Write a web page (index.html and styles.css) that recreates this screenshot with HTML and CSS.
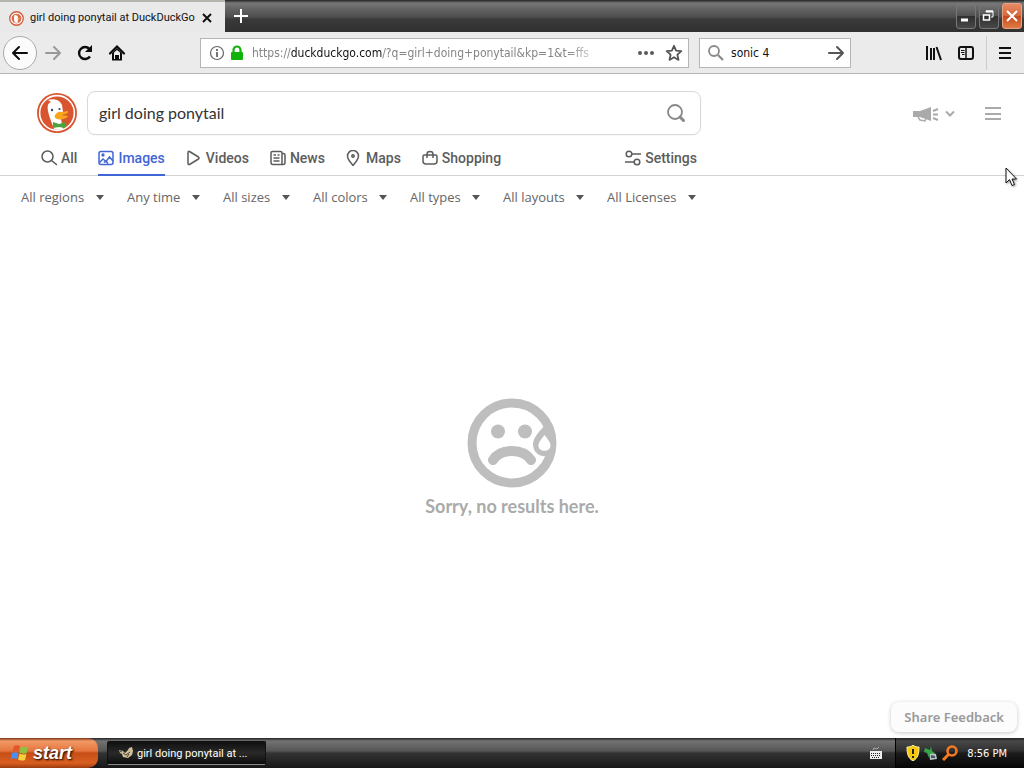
FILE: index.html
```html
<!DOCTYPE html>
<html lang="en">
<head>
<meta charset="utf-8">
<meta name="viewport" content="width=device-width, initial-scale=1">
<title>girl doing ponytail at DuckDuckGo</title>
<link rel="stylesheet" href="styles.css">
</head>
<body>
<svg class="defs" aria-hidden="true">
  <symbol id="duck" viewBox="0 0 40 40">
    <circle cx="20" cy="20" r="20" fill="#d9552f"/>
    <circle cx="20" cy="20" r="17.4" fill="#d9552f" stroke="#fff" stroke-width="1.6"/>
    <path d="M17 36c-2-6-5-12-6-18-1-5 0-8 3-9l-3-2c6-2 12 0 14 5l1 7-2 7 2 10c-3 1-6 1-9 0z" fill="#fff"/>
    <path d="M18 22c2-3 4-4 7-3 2 0 4-1 6-1 1 2-2 3-6 4 2 1 4 0 6 1-1 3-8 4-11 3-2-1-3-2-2-4z" fill="#f9a51b"/>
    <circle cx="15" cy="17" r="1.2" fill="#34475e"/>
    <circle cx="22.500" cy="16" r="1.100" fill="#34475e"/>
    <path d="M16 29l6 2 6-2v6l-6-1-6 1z" fill="#4ba43c"/>
  </symbol>
</svg>

<header class="titlebar">
  <div class="tab">
    <svg class="tab-logo" viewBox="0 0 16 16" aria-hidden="true"><circle cx="8" cy="8" r="7.200" fill="#fff" stroke="#d35b3c" stroke-width="1.400"/><circle cx="8" cy="8" r="5.200" fill="#dc6a4a"/><path d="M6 12C5 9 5 7 6 4l3 1 1 3-1 5z" fill="#fff"/><path d="M9 7l3 1-3 1z" fill="#f5b23b"/></svg>
    <span class="tab-title">girl doing ponytail at DuckDuckGo</span>
    <button class="bare" aria-label="Close tab"><svg width="10" height="10" viewBox="0 0 10 10"><path d="M1 1l8 8M9 1L1 9" stroke="#111" stroke-width="2"/></svg></button>
  </div>
  <button class="bare new-tab" aria-label="New tab"><svg width="14" height="14" viewBox="0 0 14 14"><path d="M7 0v14M0 7h14" stroke="#fff" stroke-width="2"/></svg></button>
  <div class="window-buttons">
    <button class="win" aria-label="Minimize"><svg width="16" height="16" viewBox="0 0 16 16"><path d="M3 12h7" stroke="#fff" stroke-width="3"/></svg></button>
    <button class="win" aria-label="Restore"><svg width="16" height="16" viewBox="0 0 16 16" fill="none" stroke="#fff"><path d="M5 4V3h7v6h-2"/><path d="M5 3.500h7" stroke-width="2"/><path d="M2.500 7h6v5h-6z" stroke-width="1.500"/></svg></button>
    <button class="win win-close" aria-label="Close"><svg width="16" height="16" viewBox="0 0 16 16"><path d="M3 3l10 10M13 3L3 13" stroke="#fff" stroke-width="2"/></svg></button>
  </div>
</header>

<nav class="toolbar" aria-label="Browser">
  <div class="nav-buttons">
    <button class="bare back" aria-label="Back"><svg width="18" height="18" viewBox="0 0 18 18" fill="none" stroke="#0c0c0d" stroke-width="2" stroke-linecap="round" stroke-linejoin="round"><path d="M16 9H2M8 3L2 9l6 6"/></svg></button>
    <button class="bare" aria-label="Forward"><svg width="18" height="18" viewBox="0 0 18 18" fill="none" stroke="#999" stroke-width="2" stroke-linecap="round" stroke-linejoin="round"><path d="M2 9h14M10 3l6 6-6 6"/></svg></button>
    <button class="bare" aria-label="Reload"><svg width="18" height="18" viewBox="0 0 18 18"><path d="M14 12.500A6 6 0 1 1 13.500 5" fill="none" stroke="#0c0c0d" stroke-width="2.400"/><path d="M16 1v7H9z" fill="#0c0c0d"/></svg></button>
    <button class="bare" aria-label="Home"><svg width="18" height="18" viewBox="0 0 18 18"><path d="M2 9.500L9 2.500l7 7" fill="none" stroke="#0c0c0d" stroke-width="2.200" stroke-linecap="round"/><path d="M4 9v7.500h10V9L9 4z" fill="#0c0c0d"/><path d="M6 8.500L9 6l3 2.500V15h-1v-4H7v4H6z" fill="#eee"/><path d="M8 11h2v4H8z" fill="#0c0c0d"/></svg></button>
  </div>
  <div class="address">
    <svg width="16" height="16" viewBox="0 0 16 16" aria-hidden="true"><circle cx="8" cy="8" r="6.500" fill="none" stroke="#666" stroke-width="1.200"/><path d="M8 7v5M8 4v2" stroke="#666" stroke-width="1.800"/></svg>
    <svg width="16" height="16" viewBox="0 0 16 16" aria-hidden="true"><rect x="2" y="7" width="12" height="8" rx="1" fill="#12b20c"/><path d="M4.500 8V5a3.500 3.500 0 0 1 7 0v3" fill="none" stroke="#12b20c" stroke-width="2.200"/></svg>
    <div class="url">https://<b>duckduckgo.com</b>/?q=girl+doing+ponytail&amp;kp=1&amp;t=ffs</div>
    <button class="bare" aria-label="Page actions"><svg width="18" height="18" viewBox="0 0 18 18" fill="#5a5a5a"><circle cx="3" cy="9" r="2"/><circle cx="9" cy="9" r="2"/><circle cx="15" cy="9" r="2"/></svg></button>
    <button class="bare" aria-label="Bookmark"><svg width="18" height="18" viewBox="0 0 18 18"><path d="M9 1.800l2.100 4.800 5.200.6-3.900 3.500 1.100 5.200L9 13.200l-4.500 2.700 1.100-5.200-3.900-3.500 5.200-.6z" fill="none" stroke="#555" stroke-width="1.800" stroke-linejoin="round"/></svg></button>
  </div>
  <form class="quick-search">
    <svg width="18" height="18" viewBox="0 0 18 18" aria-hidden="true" fill="none" stroke="#8a8a8a"><circle cx="7" cy="7" r="5" stroke-width="1.800"/><path d="M11 11l5 5" stroke-width="2.200"/></svg>
    <input type="text" value="sonic 4" aria-label="Browser search">
    <button type="button" class="bare" aria-label="Go"><svg width="18" height="18" viewBox="0 0 18 18" fill="none" stroke="#555" stroke-width="2" stroke-linecap="round" stroke-linejoin="round"><path d="M2 9h14M10 3l6 6-6 6"/></svg></button>
  </form>
  <div class="tools">
    <button class="bare" aria-label="Library"><svg width="18" height="18" viewBox="0 0 18 18" stroke="#111" stroke-width="2"><path d="M2 2v14M6 4v12M9 4v12M11.500 3L16 16"/></svg></button>
    <button class="bare" aria-label="Sidebar"><svg width="18" height="18" viewBox="0 0 18 18" fill="none" stroke="#111"><rect x="2" y="3" width="14" height="12" rx="2" stroke-width="2"/><path d="M9 3v12" stroke-width="1.500"/><path d="M4 6.500h3.500M4 8.500h3.500M5 10.500h2.500"/></svg></button>
    <button class="bare menu" aria-label="Menu"><svg width="18" height="18" viewBox="0 0 18 18" stroke="#111" stroke-width="2"><path d="M3 4h12M3 9h12M3 14h12"/></svg></button>
  </div>
</nav>

<div class="page">
  <header class="page-header">
    <div class="search-row">
      <a href="#" aria-label="DuckDuckGo"><svg class="logo" aria-hidden="true"><use href="#duck"/></svg></a>
      <form class="search">
        <input type="text" value="girl doing ponytail" aria-label="Search">
        <button type="button" class="bare" aria-label="Submit search"><svg width="20" height="20" viewBox="0 0 20 20" fill="none" stroke="#888"><circle cx="9" cy="9" r="7" stroke-width="1.800"/><path d="M14 14l3.500 3.500" stroke-width="3" stroke-linecap="round"/></svg></button>
      </form>
      <div class="header-actions">
        <button class="bare news" aria-label="Announcements">
          <svg width="26" height="18" viewBox="0 0 26 18" fill="#aaa"><path d="M0 7h7l11-4v14L7 13H0z"/><path d="M5 13l2 3 5 1 1-3" fill="none" stroke="#aaa" stroke-width="1.500"/><path d="M20 7l5-2M20 10.500h5M20 14l5 2" stroke="#aaa" stroke-width="2"/></svg>
          <svg width="10" height="8" viewBox="0 0 10 8"><path d="M1 2.500l4 4 4-4" fill="none" stroke="#aaa" stroke-width="2"/></svg>
        </button>
        <button class="bare" aria-label="Site menu"><svg width="16" height="16" viewBox="0 0 16 16"><path d="M0 3h16M0 9h16M0 14h16" stroke="#aaa" stroke-width="2"/></svg></button>
      </div>
    </div>
    <nav class="tabs" aria-label="Result types">
      <a href="#"><svg viewBox="0 0 16 16"><circle cx="6.500" cy="6.500" r="5.500"/><path d="M10.500 10.500L16 15"/></svg>All</a>
      <a href="#" class="active" aria-current="page"><svg viewBox="0 0 16 16"><rect x="1" y="1.500" width="14" height="13" rx="2"/><path d="M1.500 12.500L5 9l3 2.500L11.500 7l3.500 4M6 12.500l2-1.500 2 2.500"/><circle cx="5" cy="5" r=".9"/></svg>Images</a>
      <a href="#"><svg viewBox="0 0 16 16"><path d="M2 2.500v11c0 1 .8 1.300 1.500 1l9-5.500c.7-.5.700-1.500 0-2l-9-5.500c-.7-.5-1.500 0-1.500 1z"/></svg>Videos</a>
      <a href="#"><svg viewBox="0 0 16 16"><path d="M12 14V3c0-1-.5-1.500-1.500-1.500h-8C1.500 1.500 1 2 1 3v9.500C1 14 2 14.500 3 14.500h10c1.500 0 2-.5 2-2V5c0-1-.5-1.500-1.500-1.500H12"/><path d="M3.500 5H6M7.500 5h2M3.500 8h6M3.500 11h6"/></svg>News</a>
      <a href="#"><svg viewBox="0 0 16 16"><path d="M7 15.500C4.500 12.500 1.500 9.500 1.500 6a5.500 5.500 0 0 1 11 0c0 3.500-3 6.500-5.500 9.500z"/><circle cx="7" cy="6" r="1.200"/></svg>Maps</a>
      <a href="#"><svg viewBox="0 0 16 16"><path d="M2.500 5h11c1 0 1.500.5 1.500 1.500V11c0 2-1 3-3 3H4c-2 0-3-1-3-3V6.500C1 5.500 1.500 5 2.500 5zM5 8V4c0-3.500 6-3.500 6 0v4"/></svg>Shopping</a>
      <a href="#" class="settings"><svg viewBox="0 0 16 16"><circle cx="4" cy="4" r="2.800"/><path d="M7 4h9M0 12h9"/><circle cx="12" cy="12" r="2.800"/></svg>Settings</a>
    </nav>
  </header>

  <div class="filters">
    <label><select aria-label="Region"><option>All regions</option></select></label>
    <label><select aria-label="Time"><option>Any time</option></select></label>
    <label><select aria-label="Size"><option>All sizes</option></select></label>
    <label><select aria-label="Color"><option>All colors</option></select></label>
    <label><select aria-label="Type"><option>All types</option></select></label>
    <label><select aria-label="Layout"><option>All layouts</option></select></label>
    <label><select aria-label="License"><option>All Licenses</option></select></label>
  </div>

  <main class="empty">
    <svg width="90" height="90" viewBox="0 0 90 90" aria-hidden="true">
      <circle cx="45" cy="45" r="40" fill="none" stroke="#bebebe" stroke-width="9"/>
      <circle cx="31" cy="33.500" r="7" fill="#bebebe"/><circle cx="58" cy="33.500" r="7" fill="#bebebe"/>
      <path d="M26 62c8-12 30-12 38 0" fill="none" stroke="#bebebe" stroke-width="10" stroke-linecap="round"/>
      <path d="M79 26c-6 7-13 13-13 20 0 9 7 13 14 12l6-12-1-14z" fill="#bebebe"/>
      <path d="M77.500 37c-3 4-6 7-6 10.500 0 7 12 7 12 0 0-3.500-3-6.500-6-10.500z" fill="#fff"/>
    </svg>
    <p>Sorry, no results here.</p>
  </main>
  <footer class="feedback-row"><button class="feedback">Share Feedback</button></footer>
</div>

<footer class="taskbar">
  <button class="start">
    <svg width="20" height="18" viewBox="0 0 20 18" aria-hidden="true"><path d="M4 2c2-1 4-1 6 0L8.500 8C7 7 4.500 7 2.500 8z" fill="#e4572b"/><path d="M11 2.500c2 1 4 1 7 0L16.500 9c-2 1-5 1-7-.5z" fill="#8bc53f"/><path d="M2 9c2-1 4.500-1 6.500 0L7 15c-2-1-4.500-1-6.500 0z" fill="#4b8df0"/><path d="M9.500 9.500c2 1 4.500 1.500 7 .5L15 16c-2.500 1-5 .5-7-.5z" fill="#f7d13c"/></svg>
    <span>start</span>
  </button>
  <button class="task">
    <svg width="16" height="14" viewBox="0 0 16 14" aria-hidden="true"><path d="M1 4l4 1 2 2 3-3 1-2 3-1 1 4-1 4-4 3-5-1-1-3-2-1z" fill="#cfc09a"/><path d="M5 7l3 2 4-3M2 5l2 1M9 11l2-3" stroke="#4c4232" fill="none"/></svg>
    <span>girl doing ponytail at ...</span>
  </button>
  <svg class="keyboard" width="14" height="12" viewBox="0 0 14 12" aria-hidden="true"><path d="M4 3l1-2 3 1 2-2" fill="none" stroke="#aaa"/><path d="M1 4h12v8H1z" fill="#eee"/><path d="M2 6.500h10M2 8.500h10M3 10.500h8" stroke="#222" stroke-dasharray="1 1"/></svg>
  <div class="tray">
    <svg width="14" height="16" viewBox="0 0 14 16" aria-hidden="true"><path d="M7 0c2 2 4 2 6 2 0 7-1 11-6 14C2 13 1 9 1 2c2 0 4 0 6-2z" fill="#f6c90e" stroke="#fff3a8"/><path d="M7 4v5M7 11v2" stroke="#222" stroke-width="2"/></svg>
    <svg width="14" height="16" viewBox="0 0 14 16" aria-hidden="true"><path d="M5 7l7 2 1 5-7 1z" fill="#b9c4c4"/><path d="M7 10l4 1v2l-4 0z" fill="#456"/><path d="M1 3l5 2 1-4 1 5 3 2-5 1-1 4-2-5-3-1z" fill="#35a44a"/></svg>
    <svg width="16" height="16" viewBox="0 0 16 16" aria-hidden="true"><circle cx="10" cy="6" r="4.500" fill="none" stroke="#f47a20" stroke-width="2.600"/><path d="M6.500 9.500L1 15" stroke="#f47a20" stroke-width="3"/></svg>
    <time>8:56 PM</time>
  </div>
</footer>

<svg class="cursor" width="13" height="20" viewBox="0 0 13 20" aria-hidden="true"><path d="M1 1v15l3.500-3.500L7 18.500l2.500-1L7 12h4.500z" fill="#fff" stroke="#111"/></svg>
</body>
</html>
```
FILE: styles.css
```css
* { box-sizing: border-box; }

body {
  margin: 0;
  min-height: 100vh;
  display: flex;
  flex-direction: column;
  background: #fff;
  color: #555;
  font-family: "DejaVu Sans Condensed", "DejaVu Sans", sans-serif;
  font-size: 11px;
}

.defs { display: none; }
svg { flex: none; }
button, input, select { font: inherit; color: inherit; }

.bare {
  display: flex;
  align-items: center;
  justify-content: center;
  padding: 0;
  border: 0;
  background: none;
}

/* Browser chrome */
.titlebar {
  display: flex;
  height: 32px;
  background: linear-gradient(#222 0, #777 3px, #606060 10px, #4e4e4e 17px, #3a3a3a 19px, #303030);
}

.tab {
  display: flex;
  align-items: center;
  gap: 6px;
  width: 225px;
  padding: 2px 13px 0 9px;
  border-top: 2px solid #b5b5b0;
  background: #e9e9e9;
  color: #111;
}

.tab-logo { width: 15px; height: 15px; }
.tab-title { flex: 1; white-space: nowrap; font-family: Roboto, sans-serif; line-height: 14px; }
.new-tab { width: 32px; }

.window-buttons {
  display: flex;
  gap: 3px;
  margin-left: auto;
  padding: 3px 2px;
}

.win {
  display: flex;
  align-items: center;
  justify-content: center;
  width: 20px;
  height: 26px;
  padding: 0;
  border: 1px solid #777;
  border-radius: 3px;
  background: linear-gradient(#777, #505050 50%, #303030 52%, #484848);
}

.win-close {
  border-color: #e8a080;
  background: linear-gradient(#e68b65, #d5663b 50%, #c44c1e 52%, #e07b45);
}

.toolbar {
  display: flex;
  align-items: center;
  height: 42px;
  padding: 0 10px 0 3px;
  border-bottom: 1px solid #b8b8b8;
  background: #ebebeb;
}

.nav-buttons { display: flex; align-items: center; gap: 14px; margin-right: 74px; }
.nav-buttons .back {
  width: 34px;
  height: 34px;
  margin-right: -7px;
  border: 1px solid #aaa;
  border-radius: 50%;
  background: #fbfbfb;
}

.address, .quick-search {
  display: flex;
  align-items: center;
  height: 30px;
  border: 1px solid #b5b5b5;
  background: #fff;
}

.address { flex: 0 1 489px; gap: 4px; min-width: 0; padding: 0 5px 0 8px; }
.address .bare + .bare { margin-left: 6px; }

.url {
  flex: 1;
  min-width: 0;
  margin: 0 30px 0 3px;
  padding-top: 1px;
  overflow: hidden;
  white-space: nowrap;
  color: #858585;
  font-size: 12px;
  line-height: 18px;
  -webkit-mask-image: linear-gradient(to right, #000 90%, transparent);
  mask-image: linear-gradient(to right, #000 90%, transparent);
}
.url b { color: #111; font-weight: normal; }

.quick-search { width: 152px; gap: 6px; margin: 0 0 0 10px; padding: 0 5px 0 7px; }
.quick-search input {
  flex: 1;
  min-width: 0;
  padding: 1px 0 0;
  border: 0;
  outline: 0;
  background: none;
  color: #111;
  font-size: 12px;
}

.tools { display: flex; align-items: center; gap: 14px; margin-left: auto; }
.tools .menu { height: 34px; padding-left: 9px; border-left: 1px solid #ccc; margin-left: -3px; }

/* Search page */
.page {
  flex: 1;
  display: flex;
  flex-direction: column;
  font-family: Lato, "Open Sans", sans-serif;
  font-size: 14px;
}

.page-header { border-bottom: 1px solid #d2d2d2; }

.search-row {
  display: flex;
  align-items: center;
  gap: 10px;
  padding: 17px 23px 0 37px;
}
.logo { display: block; width: 40px; height: 40px; }

.search {
  display: flex;
  align-items: center;
  flex: 0 1 614px;
  height: 44px;
  padding: 0 14px 0 11px;
  border: 1px solid #d8d8d8;
  border-radius: 8px;
  box-shadow: 0 1px 2px #0000000a;
}
.search input {
  flex: 1;
  min-width: 0;
  padding: 0 0 2px;
  border: 0;
  outline: 0;
  background: none;
  color: #333;
  font-size: 16px;
}

.header-actions { display: flex; align-items: center; gap: 30px; margin-left: auto; }
.news { gap: 6px; }

.tabs {
  display: flex;
  align-items: stretch;
  gap: 21px;
  width: 697px;
  max-width: 100%;
  height: 41px;
  margin-bottom: -1px;
  padding-left: 41px;
}
.tabs a {
  display: flex;
  align-items: center;
  gap: 4px;
  padding-top: 7px;
  border-bottom: 2px solid transparent;
  color: #5c5c5c;
  font-weight: 500;
  font-family: Roboto, sans-serif;
  text-decoration: none;
}
.tabs svg {
  width: 16px;
  height: 16px;
  fill: none;
  stroke: currentColor;
  stroke-width: 1.5;
}
.tabs .active { border-color: #4265d6; color: #4265d6; }
.tabs .settings { margin-left: auto; }

.filters {
  display: flex;
  gap: 23px;
  padding: 11px 21px 0;
  font-family: "Open Sans", sans-serif;
  font-size: 13px;
}
.filters label { display: flex; align-items: center; gap: 11px; }
.filters label::after {
  content: "";
  border: 4px solid transparent;
  border-top: 5px solid #555;
  border-bottom: 0;
}
.filters select {
  appearance: none;
  height: 20px;
  padding: 0;
  border: 0;
  background: none;
  color: #666;
}

.empty {
  flex: 1;
  display: flex;
  flex-direction: column;
  align-items: center;
  justify-content: center;
  padding-top: 6px;
}
.empty p {
  margin: 7px 0 0;
  color: #aaa;
  font-size: 18px;
  font-weight: bold;
  line-height: 22px;
}

.feedback-row { display: flex; justify-content: flex-end; padding: 0 7px 6px; }
.feedback {
  height: 30px;
  padding: 0 13px;
  border: 0;
  border-radius: 8px;
  background: #fcfcfc;
  box-shadow: 0 1px 4px #00000038;
  color: #999;
  font-family: "Noto Sans", sans-serif;
  font-size: 13px;
  font-weight: 600;
}

/* Taskbar */
.taskbar {
  display: flex;
  align-items: center;
  height: 30px;
  background: linear-gradient(#222 0, #737373 3px, #555 13px, #333 15px, #171717);
  color: #fff;
}
.start {
  display: flex;
  align-items: center;
  gap: 3px;
  width: 98px;
  height: 30px;
  padding: 0 10px;
  border: 0;
  border-radius: 0 10px 10px 0;
  background: linear-gradient(#7b3316 0, #f19a68 3px, #e5753c 13px, #c64e16 15px, #d95f20 25px, #9c3b10);
  color: #fff;
  font-family: "Liberation Sans", sans-serif;
  font-size: 18px;
  font-style: italic;
  font-weight: bold;
  text-shadow: 1px 1px 2px #000;
}
.task {
  display: flex;
  align-items: center;
  gap: 3px;
  width: 159px;
  height: 24px;
  margin-left: 9px;
  padding: 0 10px;
  border: 1px solid #111;
  border-bottom-color: #888;
  border-radius: 2px;
  background: linear-gradient(#111, #292929 50%, #0c0c0c);
  font-family: Roboto, sans-serif;
  white-space: nowrap;
}
.keyboard { margin: 0 12px 0 auto; }
.tray {
  display: flex;
  align-items: center;
  gap: 4px;
  height: 30px;
  padding: 0 17px 0 10px;
  border-left: 1px solid #000;
  background: linear-gradient(#222, #484848 3px, #303030 13px, #1c1c1c 15px, #050505);
}
.tray time { margin-left: 5px; }

.cursor { position: absolute; top: 167px; right: 6px; filter: drop-shadow(1px 1px 1px #0006); }
```
